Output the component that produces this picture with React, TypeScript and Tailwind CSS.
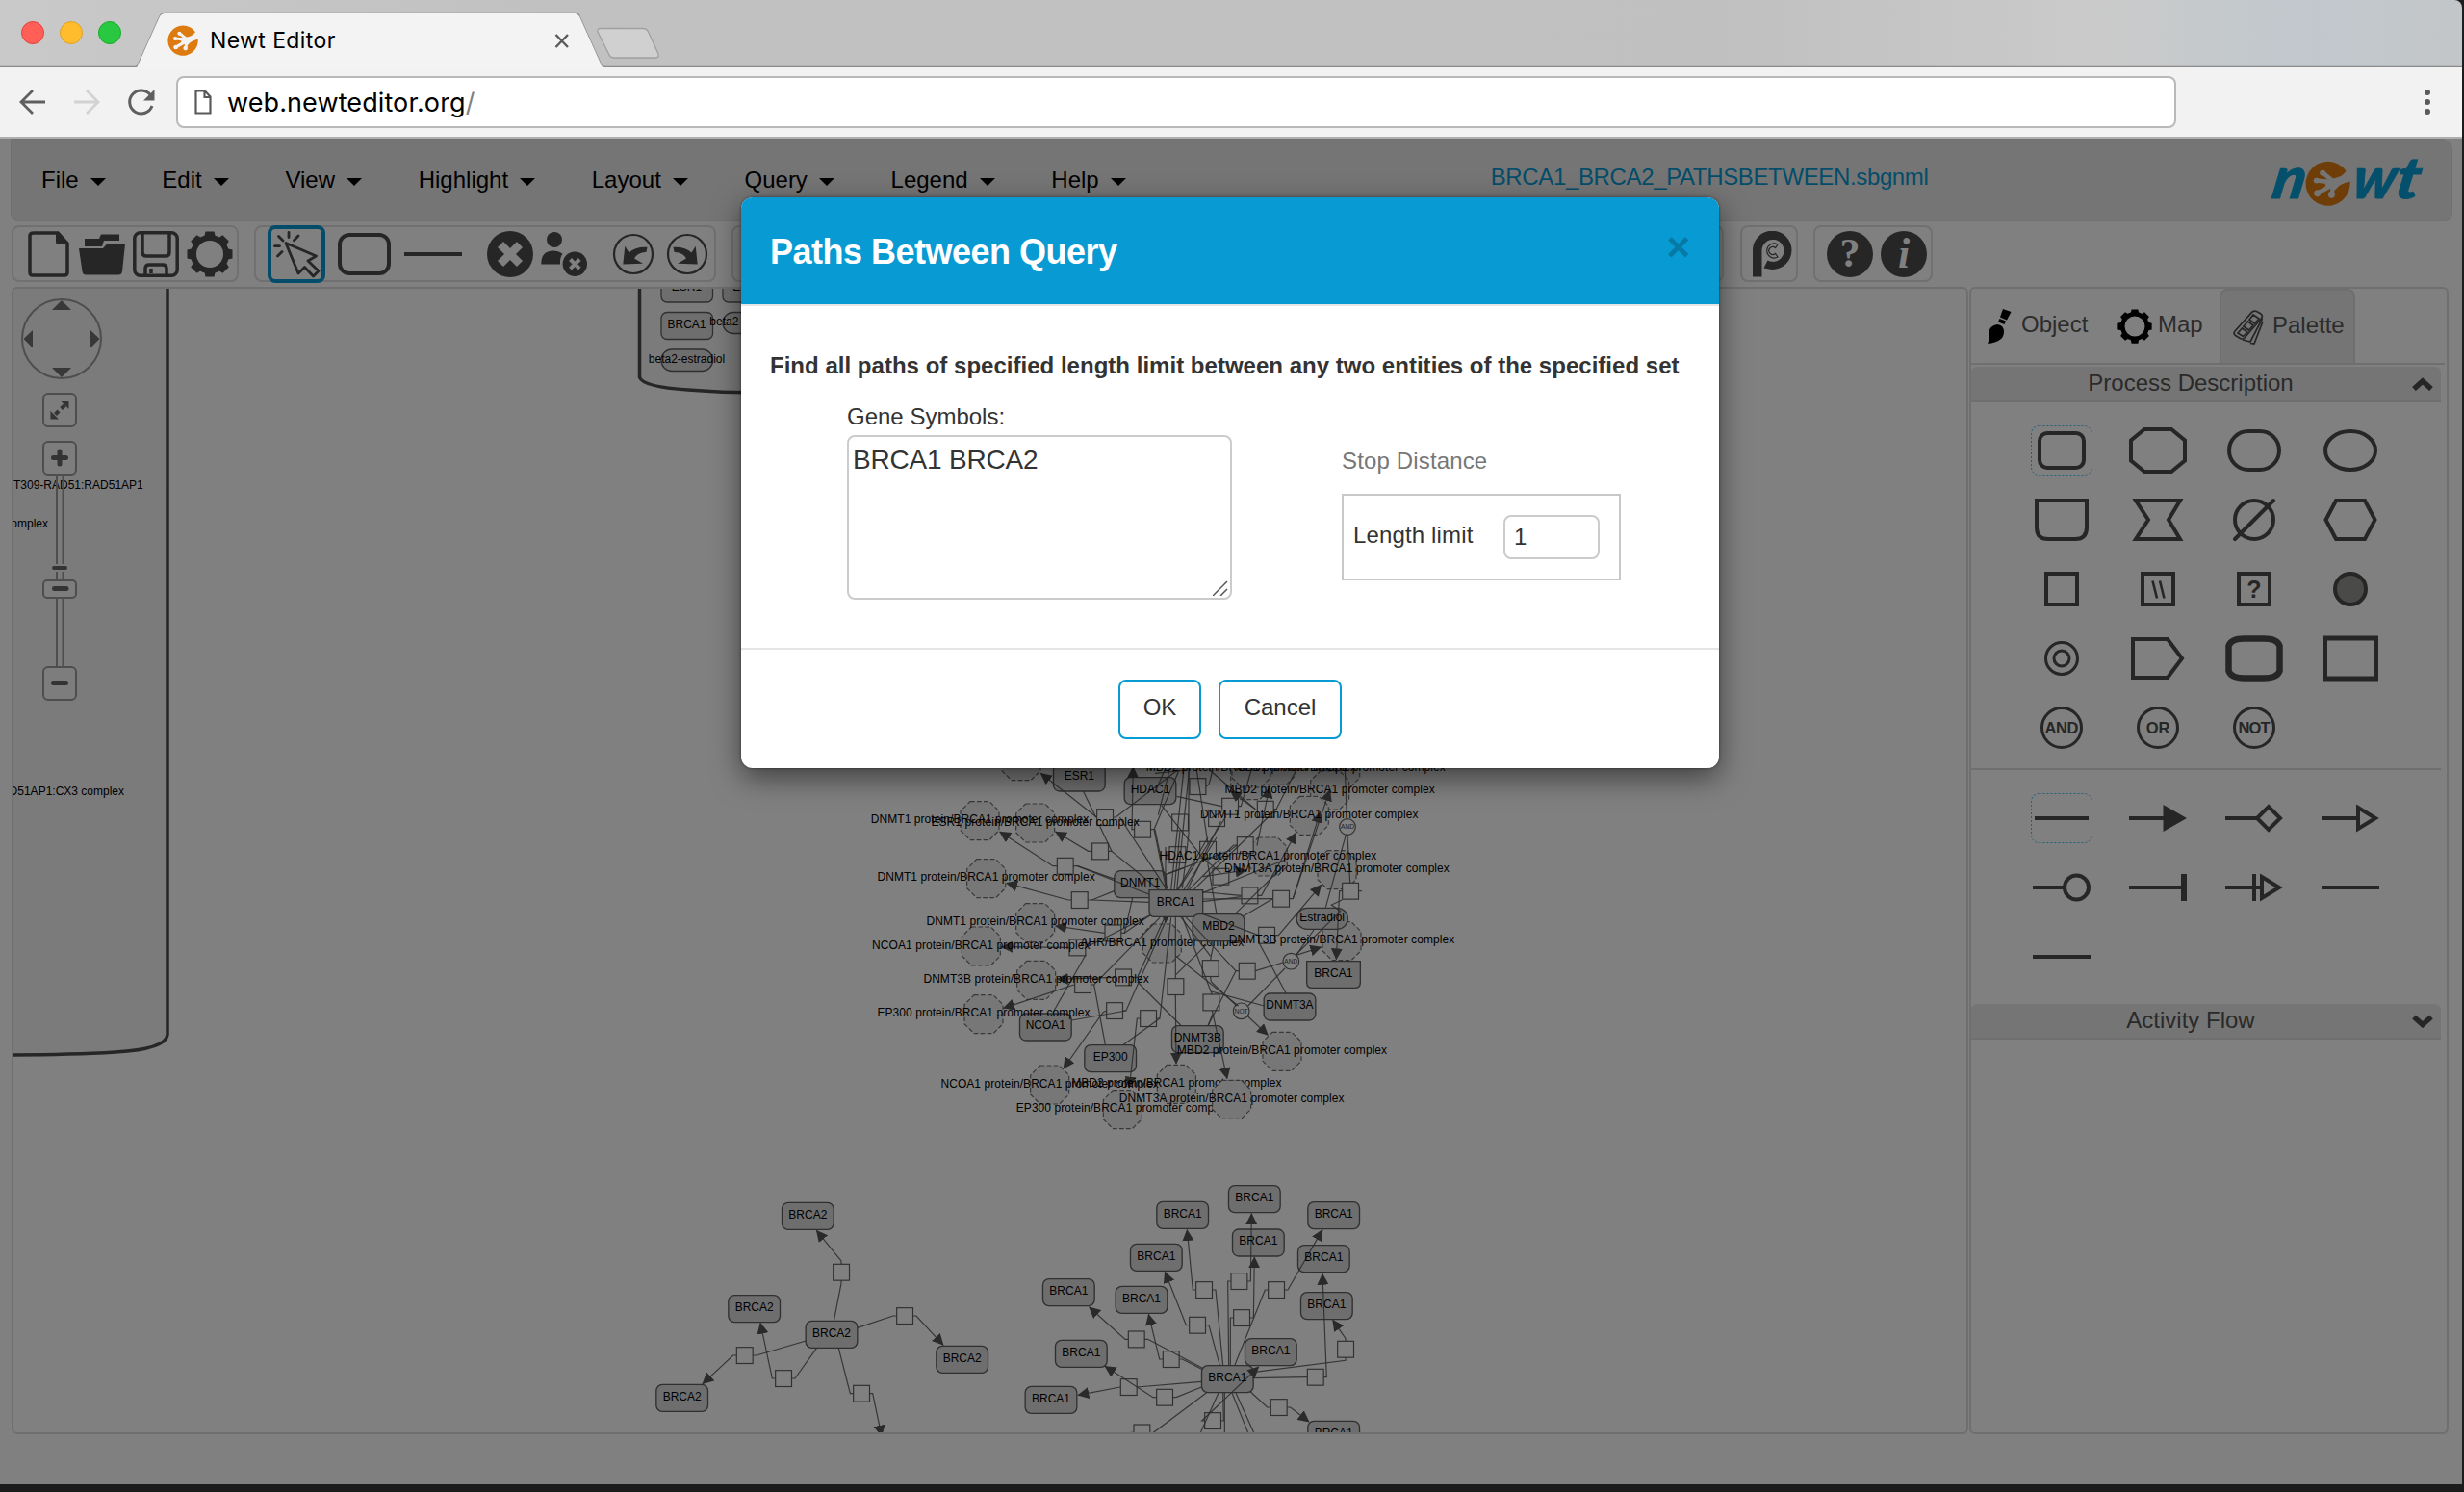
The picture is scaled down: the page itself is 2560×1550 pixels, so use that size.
import React from "react";

const INK = "#262626";

/* ---------- browser chrome ---------- */

function Paw({ className, disc, paw }: { className: string; disc: string; paw: string }) {
  return (
    <svg viewBox="0 0 48 48" className={className}>
      <path d="M43.500 11 A23.500 23.500 0 1 0 47.500 22 Q36 25 33 29 L28 22 Q38 18 43.500 11 Z" fill={disc} />
      <g stroke={paw} strokeLinecap="round" fill="none" strokeWidth="4.500">
        <path d="M30 22 L19 13" />
        <path d="M30 23 L12 21" />
        <path d="M30 25 L12 35" />
        <path d="M30 25 L28 37" />
      </g>
      <g fill={paw}>
        <path d="M20 20 Q32 20 45 13 L49 20 Q36 24 32 31 L22 28 Z" />
        <circle cx="18.500" cy="13" r="3" />
        <circle cx="12" cy="21" r="3" />
        <circle cx="13" cy="34.500" r="3.500" />
        <circle cx="28" cy="36" r="3.500" />
      </g>
    </svg>
  );
}

function TitleBar() {
  return (
    <div className="relative h-[70px] w-[2558px] overflow-hidden rounded-tr-lg bg-[linear-gradient(90deg,#c9c9c9_0%,#c1c1c1_22%,#c0c0c0_70%,#cacaca_85%,#c1c8cd_94%,#c3c6c8_100%)]">
      <svg viewBox="0 0 2558 70" className="absolute inset-0 h-[70px] w-[2558px]">
        <path d="M0 69.500 H141 Q143 69 144 66 L166 17 Q168 13.500 172 13.500 H597 Q601 13.500 602 17 L624 66 Q625 69.500 628 69.500 H2558" fill="none" stroke="#8a8a8a" strokeWidth="1.500" />
        <path d="M142 70 Q143 69 144 66 L166 17 Q168 14 172 14 H597 Q600 14 602 17 L624 66 Q625 70 628 70 Z" fill="#f3f3f3" />
        <path d="M624 29.500 H668 Q672 29.500 673.500 33 L684 56 Q685 60 681 60 H638 Q634 60 632.500 56 L621 33 Q620 29.500 624 29.500 Z" fill="#d0d0d0" stroke="#a0a0a0" strokeWidth="1.300" />
        <path d="M577.500 36 L590 49 M590 36 L577.500 49" stroke="#5a5a5a" strokeWidth="2.400" />
      </svg>
      <div className="relative flex h-[70px] items-start">
        <div className="ml-[22px] mt-[22px] flex gap-4">
          <div className="size-6 rounded-full border border-[#e0443e] bg-[#ff5f57]" />
          <div className="size-6 rounded-full border border-[#dea123] bg-[#ffbd2e]" />
          <div className="size-6 rounded-full border border-[#1aab29] bg-[#28c940]" />
        </div>
        <Paw className="ml-12 mt-[26px] size-8" disc="#dd7a10" paw="#f3f3f3" />
        <span className="ml-3 mt-[27px] font-['Inter'] text-[23px] leading-[30px] tracking-[0.4px] text-black">Newt Editor</span>
      </div>
    </div>
  );
}

function AddressBar() {
  return (
    <div className="flex h-[74px] w-[2558px] items-center border-b-2 border-[#aeaeae] bg-[#f2f2f2]">
      <svg viewBox="0 0 183 54" className="h-[54px] w-[183px] shrink-0" fill="none" strokeWidth="2.800">
        <path d="M47 27 H22 M34 15 L22 27 L34 39" stroke="#5f5f5f" />
        <path d="M77 27 H102 M90 15 L102 27 L90 39" stroke="#d2d2d2" />
        <path d="M156.500 20 A12 12 0 1 0 158 31" stroke="#5f5f5f" strokeWidth="3" />
        <path d="M160.500 14 V25.500 H149 Z" fill="#5f5f5f" />
      </svg>
      <div className="flex h-[54px] w-[2078px] items-center rounded-lg border-2 border-[#b9b9b9] bg-white">
        <svg viewBox="0 0 18 26" className="ml-[17px] h-[26px] w-[18px]" fill="none" stroke="#5a5a5a" strokeWidth="2.200">
          <path d="M1.500 1.500 H11 L16.500 7.500 V24.500 H1.500 Z M10.500 1.500 V8 H16.500" />
        </svg>
        <span className="ml-4 mt-0.5 font-['Inter'] text-[27px] leading-[40px] tracking-[0.1px] text-black">
          web.newteditor.org<span className="text-[#808080]">/</span>
        </span>
      </div>
      <div className="ml-[258px] flex flex-col gap-1">
        <div className="size-1.5 rounded-full bg-[#5a5a5a]" />
        <div className="size-1.5 rounded-full bg-[#5a5a5a]" />
        <div className="size-1.5 rounded-full bg-[#5a5a5a]" />
      </div>
    </div>
  );
}

/* ---------- application menu and toolbar ---------- */

const MENUS = ["File", "Edit", "View", "Highlight", "Layout", "Query", "Legend", "Help"];

function Logo() {
  return (
    <div className="relative ml-auto mr-[29px] h-[60px] w-[160px]">
      <svg
        viewBox="0 0 160 60"
        className="h-[60px] w-[160px] overflow-visible font-['Lato'] text-[60px] font-black italic"
        fill="#04506c"
        stroke="#04506c"
        strokeWidth="0.800"
      >
        <text transform="translate(1 49) skewX(-10)" textLength="34" lengthAdjust="spacingAndGlyphs">n</text>
        <text transform="translate(84 49) skewX(-10)" textLength="45" lengthAdjust="spacingAndGlyphs">w</text>
        <text transform="translate(129 49) skewX(-10)" textLength="25" lengthAdjust="spacingAndGlyphs">t</text>
      </svg>
      <Paw className="absolute left-[37px] top-2.5 size-[47px]" disc="#6f3e08" paw="#757575" />
    </div>
  );
}

function MenuBar() {
  return (
    <div className="ml-[11px] flex h-[86px] w-[2537px] items-center rounded-b-lg rounded-tr-xl border border-[#707070] bg-[#757575] pl-[31px]">
      <div className="flex gap-[58.7px] text-2xl text-black">
        {MENUS.map((m) => (
          <div key={m} className="flex items-center gap-3">
            <span>{m}</span>
            <svg viewBox="0 0 16 8" className="mt-1 h-2 w-4"><path d="M0 0 H16 L8 8 Z" /></svg>
          </div>
        ))}
      </div>
      <span className="ml-[379px] -mt-1.5 text-2xl tracking-[-0.36px] text-[#044d6a]">BRCA1_BRCA2_PATHSBETWEEN.sbgnml</span>
      <Logo />
    </div>
  );
}

function Gear({ className, color }: { className: string; color: string }) {
  return (
    <svg viewBox="0 0 48 48" className={className}>
      <circle cx="24" cy="24" r="17" fill="none" stroke={color} strokeWidth="6" />
      {[0, 45, 90, 135, 180, 225, 270, 315].map((a) => (
        <path key={a} d="M18 7 L19.500 0.500 H28.500 L30 7 Z" fill={color} transform={`rotate(${a} 24 24)`} />
      ))}
    </svg>
  );
}

function ToolGroup({ className, children }: { className: string; children?: React.ReactNode }) {
  return <div className={`flex h-[59px] items-center rounded-lg border-2 border-[#707070] ${className}`}>{children}</div>;
}

function Toolbar() {
  return (
    <div className="ml-3 mt-1 flex h-[60px]">
      <ToolGroup className="w-[236px] gap-2 pl-3">
        <svg viewBox="0 0 48 48" className="size-12">
          <path d="M9 2 H34 L44 13 V43 Q44 46 41 46 H8 Q5 46 5 43 V5 Q5 2 9 2 Z" fill="none" stroke={INK} strokeWidth="3.500" />
          <path d="M32 1 V11 Q32 14 35 14 H45 V12 L35 1 Z" fill={INK} />
        </svg>
        <svg viewBox="0 0 48 48" className="size-12" fill={INK}>
          <path d="M6 14 V8 H21 L23 3.500 H42 V10 H26 L24 16 H6 Z" />
          <path d="M0 18 H25 L29 13.500 H48 L45 42 Q44.500 45.500 41 45.500 H7.500 Q4 45.500 3.500 42 Z" />
        </svg>
        <svg viewBox="0 0 48 48" className="size-12" fill="none" stroke={INK} strokeWidth="3.500">
          <rect x="1.800" y="1.800" width="44.400" height="44.400" rx="6" />
          <path d="M10 2 V22 Q10 26 14 26 H34 Q38 26 38 22 V2" />
          <path d="M13 46 V39 Q13 35 17 35 H31 Q35 35 35 39 V46" />
          <path d="M19 39 V44" />
        </svg>
        <Gear className="size-12" color={INK} />
      </ToolGroup>
      <ToolGroup className="ml-4 w-[480px] pl-3">
        <div className="flex h-[60px] w-[60px] shrink-0 items-center justify-center rounded-lg border-4 border-[#044d6a]">
          <svg viewBox="0 0 48 48" className="size-12 overflow-visible" fill="none" stroke={INK} strokeWidth="2.800">
            <path d="M13 12.500 L44.500 26 L36 31 L47 41.500 L41.500 47 L32.500 37.500 L26 44 Z" strokeLinejoin="round" />
            <path d="M16 1.500 V6.500 M5.500 5.500 L10 10 M26 5 L21.500 9.700 M1.500 15.700 H6.500 M4.500 26 L9 21.500" strokeLinecap="round" />
          </svg>
        </div>
        <div className="ml-[13px] h-[44px] w-[55px] rounded-xl border-4 border-[#262626]" />
        <div className="ml-[14px] h-1 w-[60px] bg-[#262626]" />
        <svg viewBox="0 0 48 48" className="ml-[26px] size-12">
          <circle cx="24" cy="24" r="24" fill={INK} />
          <path d="M14 14 L34 34 M34 14 L14 34" stroke="#808080" strokeWidth="8.500" />
        </svg>
        <svg viewBox="0 0 48 48" className="ml-2 size-12">
          <circle cx="14" cy="9" r="8" fill={INK} />
          <path d="M0.300 34.500 Q0 20.500 13 20.500 Q18 20.500 22.500 23.500 Q19.500 28 20 34.500 Z" fill={INK} />
          <circle cx="35.300" cy="34.300" r="12.700" fill={INK} />
          <path d="M30.500 29.500 L40.200 39.200 M40.200 29.500 L30.500 39.200" stroke="#808080" strokeWidth="4" />
        </svg>
        <svg viewBox="0 0 44 44" className="ml-[26px] size-11">
          <circle cx="22" cy="22" r="20" fill="none" stroke={INK} strokeWidth="2.200" />
          <path d="M36.500 14.700 Q24 14 17.500 20.500 L13.300 13.700 L11.300 32.500 L32 31.700 L23 26.500 Q26 20.500 35.500 19.700 Z" fill={INK} />
        </svg>
        <svg viewBox="0 0 44 44" className="ml-3 size-11">
          <circle cx="22" cy="22" r="20" fill="none" stroke={INK} strokeWidth="2.200" />
          <path d="M7.500 14.700 Q20 14 26.500 20.500 L30.700 13.700 L32.700 32.500 L12 31.700 L21 26.500 Q18 20.500 8.500 19.700 Z" fill={INK} />
        </svg>
      </ToolGroup>
      <ToolGroup className="ml-4 w-[1031px]" />
      <ToolGroup className="ml-[17px] w-[60px] pl-[11px]">
        <svg viewBox="0 0 42 48" className="h-12 w-[42px]">
          <path d="M0 47.500 V20 A20 20 0 0 1 40.500 20 A20 20 0 0 1 20 40 L11.500 38.500 L15.500 30.500 A11.500 11.500 0 1 0 9.500 20 V47.500 Z" fill={INK} />
          <path d="M26 14 A7.500 7.500 0 1 0 26 27 L23.500 23.500 A4 4 0 1 1 23.500 17.500 Z" fill="none" stroke={INK} strokeWidth="1.200" />
        </svg>
      </ToolGroup>
      <ToolGroup className="ml-4 w-[124px] gap-2 pl-3">
        <div className="flex size-12 items-center justify-center rounded-full bg-[#262626] font-['Liberation_Serif'] text-[42px] font-bold text-[#808080]">?</div>
        <div className="flex size-12 items-center justify-center rounded-full bg-[#262626] font-['Liberation_Serif'] text-[44px] font-bold italic text-[#808080]">i</div>
      </ToolGroup>
    </div>
  );
}

/* ---------- network canvas ----------
   Cluster coordinates are thirds of a pixel, relative to the cluster's origin. */

type Kind = "m" | "g" | "s";
type Cluster = {
  x: number;
  y: number;
  nodes?: [number, number, string, Kind?][];
  complexes?: [number, number, string][];
  processes?: [number, number][];
  gates?: [number, number, string][];
  arrows: string[];
  lines: string[];
};

const CLUSTERS: Cluster[] = [
  {
    x: 890, y: 780,
    nodes: [[694, 42, "ESR1"], [915, 83, "HDAC1"], [884, 374, "DNMT1"], [589, 819, "NCOA1"], [791, 917, "EP300"]],
    complexes: [
      [513, 32, ""], [384, 218, "DNMT1 protein"], [557, 225, "ESR1 protein"], [404, 398, "DNMT1 protein"],
      [557, 536, "DNMT1 protein"], [388, 609, "NCOA1 protein"], [560, 715, "DNMT3B protein"], [396, 821, "EP300 protein"],
      [602, 1041, "NCOA1 protein"], [829, 1118, "EP300 protein"], [952, 600, "AHR"], [997, 1039, "MBD2 protein"],
    ],
    processes: [[774, 207], [759, 313], [650, 359], [695, 465], [799, 568], [688, 613], [705, 729], [831, 706], [804, 810], [909, 834], [891, 245]],
    arrows: [
      "748,207 574,70", "733,313 722,313 620,252", "624,359 612,359 446,252", "669,465 660,465 467,412", "773,568 620,546",
      "662,613 452,611", "679,729 668,732 458,802", "805,706 625,712", "778,810 768,815 645,990", "883,834 874,834 850,1050",
      "865,245 858,245 862,50", "963,300 963,535",
    ],
    lines: [
      "746,207 706,125", "800,207 808,207 1000,60", "820,207 965,430", "785,313 795,313 945,435", "795,313 758,235",
      "676,359 688,359 805,400", "688,359 911,447", "721,465 733,465 803,437", "733,465 911,472", "825,568 835,568 860,458",
      "835,568 915,512", "714,613 915,512", "714,636 612,815", "731,729 740,729 945,520", "740,729 775,916",
      "857,706 875,706 960,520", "875,720 1010,855", "830,810 840,810 968,520", "840,810 670,840", "935,834 945,834 980,520",
      "945,834 832,916", "917,245 927,245 965,430", "927,245 1005,60", "963,325 975,325", "965,385 1020,365",
    ],
  },
  {
    x: 1200, y: 780,
    nodes: [[65, 434, "BRCA1", "g"], [198, 509, "MBD2"], [521, 490, "Estradiol", "s"], [556, 656, "BRCA1", "g"], [420, 756, "DNMT3A"], [133, 857, "DNMT3B"]],
    complexes: [
      [296, 92, ""], [379, 46, ""], [578, 54, "MBD2 protein"], [300, 54, "MBD2 protein"], [545, 123, "MBD2 protein"], [481, 202, "DNMT1 protein"],
      [352, 330, "HDAC1 protein"], [567, 371, "DNMT3A protein"], [582, 593, "DNMT3B protein"], [396, 937, "MBD2 protein"],
      [239, 1087, "DNMT3A protein"],
    ],
    processes: [
      [133, 111], [234, 173], [192, 210], [344, 182], [78, 223], [70, 324], [165, 308], [281, 294], [205, 392], [295, 451],
      [393, 461], [609, 437], [348, 575], [173, 678], [287, 686], [64, 735], [175, 784],
    ],
    gates: [[600, 237, "AND"], [424, 656, "AND"], [269, 811, "NOT"]],
    arrows: [
      "320,294 318,294 357,114", "313,182 235,125", "320,451 332,451 440,255", "419,461 430,461 545,122", "430,461 515,190",
      "374,575 385,575 518,418", "583,437 575,437 565,650", "440,637 518,612", "178,810 225,1022", "64,761 66,975", "290,828 352,886",
      "150,392 285,372",
    ],
    lines: [
      "68,142 208,173", "159,111 168,105 180,60", "68,434 107,55", "50,434 90,55", "85,430 105,260 105,55", "130,60 165,290",
      "165,334 165,355 192,509", "0,245 38,430", "20,170 150,335 205,380", "208,190 175,210", "260,173 268,173 300,60",
      "170,60 313,182", "370,182 378,182 440,60", "218,210 72,434", "165,270 70,434", "105,434 245,294 255,294", "100,434 205,220",
      "90,434 192,270", "120,434 380,180", "148,443 405,340", "40,383 235,310 255,294", "148,440 268,451", "148,462 367,461",
      "250,508 400,360", "148,470 268,455", "367,461 275,515", "148,508 322,575", "325,600 408,755", "600,262 608,411", "595,262 532,488",
      "598,212 592,55", "635,437 645,437", "583,465 550,480 578,500 440,635", "440,637 495,558", "405,678 290,795",
      "313,686 398,660", "261,686 252,686 95,517", "252,686 165,857", "173,652 175,640 185,592", "173,640 80,517",
      "173,705 175,720 255,795", "65,640 260,795", "175,750 340,795", "100,60 0,70", "85,517 178,760", "64,710 64,517", "65,698 160,605",
      "180,820 165,857", "30,60 0,130", "10,200 45,60", "60,434 78,250",
    ],
  },
  {
    x: 660, y: 1200,
    nodes: [[538, 148, "BRCA2"], [371, 437, "BRCA2"], [612, 517, "BRCA2"], [1019, 595, "BRCA2"], [146, 715, "BRCA2"]],
    processes: [[642, 365], [840, 501], [341, 624], [462, 696], [705, 743]],
    arrows: ["642,339 642,330 565,235", "866,501 876,501 960,592", "315,624 305,624 210,713", "436,696 427,696 390,523", "731,743 740,743 768,876"],
    lines: ["642,391 642,400 619,517", "814,501 804,501 693,538", "367,624 378,624 532,579", "488,696 498,696 565,602", "634,602 670,743 679,743"],
  },
  {
    x: 1040, y: 1200,
    nodes: [
      [566, 145, "BRCA1"], [790, 95, "BRCA1"], [1037, 146, "BRCA1"], [484, 277, "BRCA1"], [802, 231, "BRCA1"], [1006, 281, "BRCA1"],
      [211, 386, "BRCA1"], [438, 409, "BRCA1"], [1015, 428, "BRCA1"], [250, 577, "BRCA1"], [841, 572, "BRCA1"], [156, 721, "BRCA1"],
      [706, 656, "BRCA1"], [1037, 829, "BRCA1"],
    ],
    processes: [
      [633, 420], [742, 393], [858, 420], [612, 530], [750, 507], [422, 574], [530, 636], [1074, 605], [398, 723], [510, 755],
      [980, 692], [866, 786], [660, 828], [439, 865],
    ],
    arrows: [
      "607,420 598,420 580,233", "768,393 778,393 781,182", "776,507 787,507 790,318", "884,420 894,420 1002,233", "586,530 577,530 511,364",
      "396,574 387,574 275,474", "504,636 494,636 460,496", "1074,579 1074,571 1034,514", "1006,692 1015,692 1002,370", "372,723 240,748",
      "484,755 474,755 324,658", "892,786 902,786 960,831", "634,828 626,828 803,660",
    ],
    lines: [
      "659,420 669,420 692,656", "716,393 707,393 710,656", "724,507 715,507 715,656", "832,420 823,420 728,656", "638,530 648,530 682,656",
      "448,574 458,574 628,664", "556,636 565,636 628,668", "1074,631 1074,640 785,677", "954,692 785,695", "424,723 625,706",
      "536,755 546,755 625,723", "840,786 830,786 778,738", "686,828 694,828 692,741", "697,741 697,870", "640,741 475,865",
      "678,741 622,865", "720,741 770,865", "732,741 788,865", "413,865 403,865",
    ],
  },
];

function NodeShape({ x, y, kind }: { x: number; y: number; kind?: Kind }) {
  if (kind === "g") {
    return <path d={`M${x - 83} ${y} h167 v66 q0 17 -17 17 h-133 q-17 0 -17 -17 z`} />;
  }
  if (kind === "s") return <rect x={x - 80} y={y} width="160" height="66" rx="33" />;
  return <rect x={x - 80.5} y={y} width="161" height="84" rx="19" />;
}

function ClusterView({ c }: { c: Cluster }) {
  return (
    <g transform={`translate(${c.x} ${c.y}) scale(0.33333)`}>
      <g fill="#777777" stroke="#383838" strokeWidth="3.500" strokeDasharray="14 7">
        {c.complexes?.map(([x, y], i) => (
          <path key={i} d={`M${x - 30} ${y - 60} h60 l30 30 v60 l-30 30 h-60 l-30 -30 v-60 z`} />
        ))}
      </g>
      <g fill="#6e6e6e" stroke="#303030" strokeWidth="4">
        {c.nodes?.map(([x, y, , k], i) => <NodeShape key={i} x={x} y={y} kind={k} />)}
      </g>
      <g fill="#808080" stroke="#303030" strokeWidth="3.500">
        {c.processes?.map(([x, y], i) => <rect key={i} x={x - 25} y={y - 25} width="50.500" height="50.500" />)}
        {c.gates?.map(([x, y], i) => <circle key={i} cx={x} cy={y} r="25" />)}
      </g>
      <g fill="none" stroke="#2c2c2c" strokeWidth="3.500" strokeOpacity="0.9">
        {c.lines.map((p, i) => <polyline key={i} points={p} />)}
        {c.arrows.map((p, i) => <polyline key={i} points={p} markerEnd="url(#head)" />)}
      </g>
      <g fontSize="36" textAnchor="middle" fill="#000">
        {c.nodes?.map(([x, y, t, k], i) => <text key={i} x={x} y={y + (k === "s" ? 40 : 49)}>{t}</text>)}
        {c.complexes?.map(([x, y, t], i) => t && <text key={i} x={x} y={y + 8} letterSpacing="0.22">{t}/BRCA1 promoter complex</text>)}
      </g>
      <g fontSize="20" textAnchor="middle" fill="#222">
        {c.gates?.map(([x, y, t], i) => <text key={i} x={x} y={y + 7}>{t}</text>)}
      </g>
    </g>
  );
}

function ZoomControls() {
  return (
    <g fill="none" stroke="#4e4e4e" strokeWidth="2">
      <circle cx="64" cy="352" r="41" />
      <g fill="#383838" stroke="none">
        <path d="M54 322 L64 312 L74 322 Z M54 382 L64 392 L74 382 Z M34 343 L24.500 352 L34 361.500 Z M94 343 L103.500 352 L94 361.500 Z" />
      </g>
      <path d="M59 494 V586 M65.500 494 V586 M59 594 V602 M65.500 594 V602 M59 622 V692 M65.500 622 V692" />
      <rect x="45" y="409" width="34" height="34" rx="5" fill="#7d7d7d" />
      <rect x="45" y="459" width="34" height="34" rx="5" fill="#7d7d7d" />
      <rect x="45" y="603" width="34" height="18" rx="4" fill="#7d7d7d" />
      <rect x="45" y="693" width="34" height="34" rx="5" fill="#7d7d7d" />
      <g stroke="#343434" strokeWidth="5" strokeLinecap="round">
        <path d="M55.500 475.500 H68.500 M62 469 V482 M56.500 611.500 H69 M55.500 709.500 H68.500" />
        <path d="M56 590 H68" strokeWidth="4" />
      </g>
      <path d="M57.500 430.500 L61 427 M63.500 424.500 L67.500 421" stroke="#343434" strokeWidth="4" />
      <path d="M52.500 427 V435.500 H61 Z M63.500 417 H71.500 V425 Z" fill="#343434" stroke="none" />
    </g>
  );
}

function Network() {
  return (
    <div className="h-[1192px] w-[2033px] overflow-hidden rounded-md border-2 border-[#6f6f6f]">
      <svg viewBox="14 300 2029 1188" className="h-[1188px] w-[2029px] font-['Liberation_Sans']">
        <defs>
          <marker id="head" markerUnits="userSpaceOnUse" markerWidth="36" markerHeight="36" refX="34" refY="18" orient="auto">
            <path d="M0 0 L36 18 L0 36 Z" fill="#2a2a2a" />
          </marker>
        </defs>
        <path d="M14 290 H174 V1075 Q172 1090 120 1093 Q70 1096 0 1096 V290 Z" fill="#7b7b7b" stroke={INK} strokeWidth="3.500" />
        <path d="M664.500 290 V392 Q668 402 715 405 Q750 408 800 408 V290 Z" fill="#7b7b7b" stroke={INK} strokeWidth="3.500" />
        <g fill="#6e6e6e" stroke="#303030" strokeWidth="1.300">
          <rect x="687" y="286" width="53.500" height="28" rx="6" />
          <rect x="751" y="286" width="53.500" height="28" rx="6" />
          <rect x="687" y="324.500" width="53.500" height="28" rx="6" />
          <rect x="751" y="324.500" width="53.500" height="22" rx="11" />
          <rect x="687" y="363" width="53.500" height="22.500" rx="11" />
        </g>
        <g fontSize="12" fill="#000">
          <text x="14" y="507.500">T309-RAD51:RAD51AP1</text>
          <text x="50" y="547.500" textAnchor="end">omplex</text>
          <text x="129" y="825.500" textAnchor="end">D51AP1:CX3 complex</text>
          <g textAnchor="middle">
            <text x="713.500" y="302">ESR1</text>
            <text x="777" y="302">ESR1</text>
            <text x="713.500" y="340.500">BRCA1</text>
            <text x="777" y="338">beta2-estradiol</text>
            <text x="713.500" y="376.500">beta2-estradiol</text>
          </g>
        </g>
        {CLUSTERS.map((c, i) => <ClusterView key={i} c={c} />)}
        <ZoomControls />
      </svg>
    </div>
  );
}

/* ---------- side panel ---------- */

const SHAPES: React.ReactNode[] = [
  <rect x="-23" y="-18" width="46" height="36" rx="8" />,
  <path d="M-14 -22 H14 L28 -10.500 V10.500 L14 22 H-14 L-28 10.500 V-10.500 Z" />,
  <rect x="-26" y="-20" width="52" height="40" rx="20" />,
  <ellipse rx="26" ry="20" />,
  <path d="M-26 -20 H26 V8 Q26 20 14 20 H-14 Q-26 20 -26 8 Z" />,
  <path d="M-23 -20 H23 L11 0 L23 20 H-23 L-10 0 Z" />,
  <><circle r="20" /><path d="M-20 20 L20 -20" strokeLinecap="round" /></>,
  <path d="M-15 -20 H15 L25.500 0 L15 20 H-15 L-25.500 0 Z" />,
  <rect x="-16" y="-16" width="32" height="32" />,
  <><rect x="-16" y="-16" width="32" height="32" /><path d="M-5.500 -8.500 L-1 9.500 M2 -8.500 L6.500 9.500" strokeWidth="2.600" /></>,
  <><rect x="-16" y="-16" width="32" height="32" /><text y="9" fontSize="25" fontWeight="700" textAnchor="middle" fill={INK} stroke="none">?</text></>,
  <circle r="16" fill="#4a4a48" />,
  <><circle r="16.500" strokeWidth="3" /><circle r="8" strokeWidth="3" /></>,
  <path d="M-26 -20 H10 L25 0 L10 20 H-26 Z" />,
  <path d="M-26.500 -13 Q-24 -20.500 -10 -20.500 H10 Q24 -20.500 26.500 -13 V13 Q24 20.500 10 20.500 H-10 Q-24 20.500 -26.500 13 Z" strokeWidth="6.500" />,
  <rect x="-26.500" y="-21" width="53" height="42" strokeWidth="5" />,
  <><circle r="20.500" strokeWidth="3" /><text y="6" fontSize="16.500" fontWeight="700" textAnchor="middle" textLength="35" fill={INK} stroke="none">AND</text></>,
  <><circle r="20.500" strokeWidth="3" /><text y="6" fontSize="16.500" fontWeight="700" textAnchor="middle" fill={INK} stroke="none">OR</text></>,
  <><circle r="20.500" strokeWidth="3" /><text y="6" fontSize="16.500" fontWeight="700" textAnchor="middle" textLength="33" fill={INK} stroke="none">NOT</text></>,
];

const EDGES: React.ReactNode[] = [
  <path d="M-28 0 H28" />,
  <><path d="M-30 0 H8" /><path d="M5.500 -14 L30 0 L5.500 14 Z" fill={INK} stroke="none" /></>,
  <><path d="M-30 0 H3" /><path d="M3 0 L15 -12 L27 0 L15 12 Z" /></>,
  <><path d="M-30 0 H7" /><path d="M8 -11 L26 0 L8 11 Z" /></>,
  <><path d="M-30 0 H3" /><circle cx="15.500" r="12.500" /></>,
  <><path d="M-30 0 H26" /><path d="M27 -14 V14" strokeWidth="6" /></>,
  <><path d="M-30 0 H8" /><path d="M0 -14 V14" /><path d="M8 -11 L26 0 L8 11 Z" /></>,
  <path d="M-30 0 H30" />,
  <path d="M-30 0 H30" />,
];

function IconGrid({ items }: { items: React.ReactNode[] }) {
  return (
    <div className="ml-[44px] grid w-[400px] grid-cols-4">
      {items.map((s, i) => (
        <div key={i} className="flex h-[72px] items-center justify-center">
          <svg
            viewBox="-32 -26 64 52"
            className="h-[52px] w-[64px] overflow-visible font-['Liberation_Sans']"
            fill="none"
            stroke={INK}
            strokeWidth="4"
          >
            {i === 0 && <rect x="-31.500" y="-25.500" width="63" height="51" rx="8" stroke="#1f6179" strokeWidth="1" strokeDasharray="2 2" />}
            {s}
          </svg>
        </div>
      ))}
    </div>
  );
}

function SectionBar({ title, up }: { title: string; up?: boolean }) {
  return (
    <div className="flex h-[37px] w-[488px] items-center rounded-t-md border-b-2 border-[#6f6f6f] bg-[#757575] text-2xl leading-8 text-[#2a2a2a]">
      <span className="-mt-0.5 w-[456px] text-center">{title}</span>
      <svg viewBox="0 0 22 14" className="ml-0.5 h-3.5 w-[22px]" fill="none" stroke={INK} strokeWidth="5.500">
        <path d={up ? "M2 12 L11 4 L20 12" : "M2 2.500 L11 10.500 L20 2.500"} />
      </svg>
    </div>
  );
}

function SidePanel() {
  return (
    <div className="ml-px h-[1192px] w-[498px] rounded-md border-2 border-[#6f6f6f]">
      <div className="flex h-[79px] w-[492px] border-b-2 border-[#6f6f6f] text-2xl text-[#2c2c2c]">
        <div className="flex w-[136px] items-center pl-4">
          <svg viewBox="0 0 26 36" className="mr-[10px] h-9 w-[26px]" fill="#000">
            <path d="M17 0 L25.500 3 L21 11.500 L14 8.500 Z" />
            <path d="M13.500 10 L20 12.500 L18.500 16 L12 13.500 Z" />
            <path d="M11 16 Q18 16.500 18 24 Q18 34 1 36 Q3 32 2 26 Q2 17.500 11 16 Z" />
          </svg>
          <span className="-mt-1">Object</span>
        </div>
        <div className="flex w-[122px] items-center pl-4">
          <Gear className="mr-[6px] size-9" color="#000" />
          <span className="-mt-1">Map</span>
        </div>
        <div className="flex w-[141px] items-center rounded-t-lg border-2 border-b-0 border-[#6f6f6f] bg-[#757575] pl-3">
          <svg viewBox="0 0 32 36" className="mr-[9px] h-9 w-8" fill="none" stroke={INK} strokeWidth="1.700">
            <path d="M20 2 Q22 0.500 24.500 1.500 L29 4 Q31 5.500 30 8 L12 29 Q10 31 7.500 29.500 L2.500 26.500 Q0 24.500 2 22 Z" />
            <path d="M21 5 L27 9 L22.500 14 L17 10 Z M15.500 12 L21 16 L16.500 21 L11 17 Z M9.500 19 L15 23 L10.500 27.500 L5 24 Z" />
            <path d="M30.500 9 L18 33 L10 31 M31 12 L22 35 L18 34.500" />
          </svg>
          <span className="-mt-1">Palette</span>
        </div>
      </div>
      <div className="mt-0.5"><SectionBar title="Process Description" up /></div>
      <div className="mt-[14px]"><IconGrid items={SHAPES} /></div>
      <div className="mt-[6px] h-0.5 w-[488px] bg-[#6f6f6f]" />
      <div className="mt-[14px]"><IconGrid items={EDGES} /></div>
      <div className="mt-[13px]"><SectionBar title="Activity Flow" /></div>
    </div>
  );
}

/* ---------- query dialog ---------- */

function QueryDialog() {
  return (
    <div className="absolute left-[770px] top-[205px] flex h-[593px] w-[1016px] flex-col overflow-hidden rounded-xl bg-white text-2xl text-[#333333] shadow-[0_10px_30px_rgba(0,0,0,0.5),0_0_3px_rgba(0,0,0,0.5)]">
      <div className="flex h-[113px] shrink-0 items-start justify-between border-b-2 border-[#e5e5e5] bg-[#089ad3] pl-[30px] pr-[30px]">
        <h1 className="mt-[32px] text-[36px] font-bold leading-[50px] tracking-[-0.5px] text-white">Paths Between Query</h1>
        <span className="mt-[31px] text-[42px] font-bold leading-[42px] text-[#0779a5]">×</span>
      </div>
      <div className="h-[357px] border-b-2 border-[#e5e5e5] pl-[30px]">
        <p className="mt-[46px] whitespace-nowrap font-bold leading-8 tracking-[0.02px]">Find all paths of specified length limit between any two entities of the specified set</p>
        <div className="ml-[80px] mt-[21px] flex">
          <div>
            <div className="leading-8">Gene Symbols:</div>
            <div className="relative mt-[3px] h-[171px] w-[400px] rounded-lg border-2 border-[#cccccc] pl-1 pt-1.5 text-[28px] leading-9 tracking-[-0.2px]">
              BRCA1 BRCA2
              <svg viewBox="0 0 16 16" className="absolute bottom-0.5 right-0.5 size-4" stroke="#555" strokeWidth="1.500">
                <path d="M0 16 L15 1 M8 16 L15 9" />
              </svg>
            </div>
          </div>
          <div className="ml-[114px] mt-[46px]">
            <div className="leading-8 tracking-[0.15px] text-[#777777]">Stop Distance</div>
            <div className="mt-[18px] flex h-[90px] w-[290px] items-center border-2 border-[#c8c8c8] pl-[10px]">
              <span className="-mt-1 w-[125px] tracking-[0.15px]">Length limit</span>
              <div className="ml-[31px] flex h-[46px] w-[100px] items-center rounded-lg border-2 border-[#cccccc] pl-[9px]">1</div>
            </div>
          </div>
        </div>
      </div>
      <div className="flex justify-center gap-[18px] pt-[31px] leading-[54px]">
        <button className="flex h-[62px] w-[86px] justify-center rounded-lg border-2 border-[#089ad3]">OK</button>
        <button className="flex h-[62px] w-[128px] justify-center rounded-lg border-2 border-[#089ad3]">Cancel</button>
      </div>
    </div>
  );
}

export default function App() {
  return (
    <div className="relative h-[1550px] w-[2560px] overflow-hidden bg-[#1c1c1c] font-['Liberation_Sans',sans-serif]">
      <TitleBar />
      <AddressBar />
      <div className="h-[1398px] w-[2558px] bg-[#808080]">
        <MenuBar />
        <Toolbar />
        <div className="ml-3 mt-1 flex">
          <Network />
          <SidePanel />
        </div>
      </div>
      <QueryDialog />
    </div>
  );
}
